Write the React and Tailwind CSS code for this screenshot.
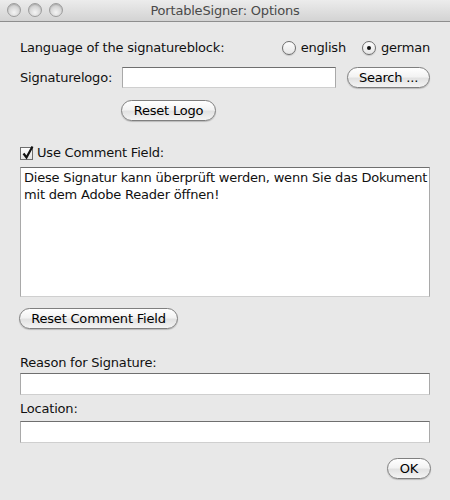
import React from "react";

const font = { fontFamily: '"DejaVu Sans", "Lucida Grande", sans-serif' };

function Light() {
  return (
    <div className="w-[14px] h-[14px] rounded-full border border-[#9c9c9c] bg-[radial-gradient(circle_at_50%_70%,#f4f4f4_0%,#d6d6d6_55%,#bdbdbd_100%)] shadow-[inset_0_1px_1px_rgba(0,0,0,0.15)]" />
  );
}

function AquaButton({ children, className = "" }) {
  return (
    <div
      className={
        "h-[21px] rounded-full border border-[#7f7f7f] bg-[linear-gradient(#ffffff,#f3f3f3_45%,#e2e2e2_55%,#f4f4f4)] shadow-[0_1px_1px_rgba(0,0,0,0.2)] flex items-center justify-center text-[13px] text-black leading-none " +
        className
      }
    >
      {children}
    </div>
  );
}

function Field({ className = "" }) {
  return (
    <div
      className={
        "bg-white border border-t-[#6f6f6f] border-l-[#a9a9a9] border-r-[#a9a9a9] border-b-[#cfcfcf] " +
        className
      }
    />
  );
}

function Radio({ checked }) {
  return (
    <div className="w-[14px] h-[14px] rounded-full border border-[#6d6d6d] bg-[linear-gradient(#fdfdfd,#e6e6e6)] flex items-center justify-center shadow-[0_1px_1px_rgba(0,0,0,0.15)]">
      {checked && <div className="w-[4px] h-[4px] rounded-full bg-[#111]" />}
    </div>
  );
}

export default function App() {
  return (
    <div className="w-[450px] h-[500px] bg-[#e8e8e8] flex flex-col text-[13px] tracking-[-0.2px] text-[#111]" style={font}>
      {/* Title bar */}
      <div className="h-[22px] relative flex items-center justify-center bg-[linear-gradient(#ececec,#d3d3d3)] border-b border-[#8e8e8e]">
        <div className="absolute left-[7px] top-[3px] flex gap-[7px]">
          <Light />
          <Light />
          <Light />
        </div>
        <span className="text-[13px] text-[#4a4a4a]">PortableSigner: Options</span>
      </div>

      <div className="flex flex-col px-[20px]">
        {/* Language row */}
        <div className="mt-[17px] h-[18px] flex items-center">
          <span>Language of the signatureblock:</span>
          <div className="ml-auto flex items-center">
            <Radio />
            <span className="ml-[5px]">english</span>
            <div className="ml-[16px]"><Radio checked /></div>
            <span className="ml-[5px]">german</span>
          </div>
        </div>

        {/* Signaturelogo row */}
        <div className="mt-[10px] flex items-center">
          <span className="w-[102px]">Signaturelogo:</span>
          <Field className="w-[214px] h-[21px]" />
          <AquaButton className="ml-[11px] w-[83px]">Search ...</AquaButton>
        </div>

        <div className="mt-[12px] ml-[101px]">
          <AquaButton className="w-[95px]">Reset Logo</AquaButton>
        </div>

        {/* Checkbox */}
        <div className="mt-[24px] h-[16px] flex items-center">
          <div className="relative w-[13px] h-[13px] border border-[#6d6d6d] bg-[linear-gradient(#fdfdfd,#e4e4e4)]">
            <svg className="absolute left-[0px] top-[-3px]" width="14" height="15" viewBox="0 0 14 15">
              <path d="M2.5 8.5 L5.5 12.5 L11.5 1.5" fill="none" stroke="#111" strokeWidth="2.2" strokeLinejoin="miter" />
            </svg>
          </div>
          <span className="ml-[4px]">Use Comment Field:</span>
        </div>

        {/* Textarea */}
        <div className="mt-[6px] h-[130px] bg-white border border-t-[#6f6f6f] border-l-[#a9a9a9] border-r-[#a9a9a9] border-b-[#cfcfcf] px-[3px] pt-[1px] leading-[17px] overflow-hidden">
          <div className="whitespace-nowrap">Diese Signatur kann überprüft werden, wenn Sie das Dokument</div>
          <div className="whitespace-nowrap">mit dem Adobe Reader öffnen!</div>
        </div>

        <div className="mt-[11px] -ml-[1px]">
          <AquaButton className="w-[159px]">Reset Comment Field</AquaButton>
        </div>

        <div className="mt-[26px] h-[16px] flex items-center">Reason for Signature:</div>
        <Field className="mt-[2px] h-[22px]" />
        <div className="mt-[6px] h-[16px] flex items-center">Location:</div>
        <Field className="mt-[4px] h-[22px]" />

        <div className="mt-[15px] flex justify-end">
          <AquaButton className="w-[44px] -mr-[1px]">OK</AquaButton>
        </div>
      </div>
    </div>
  );
}
